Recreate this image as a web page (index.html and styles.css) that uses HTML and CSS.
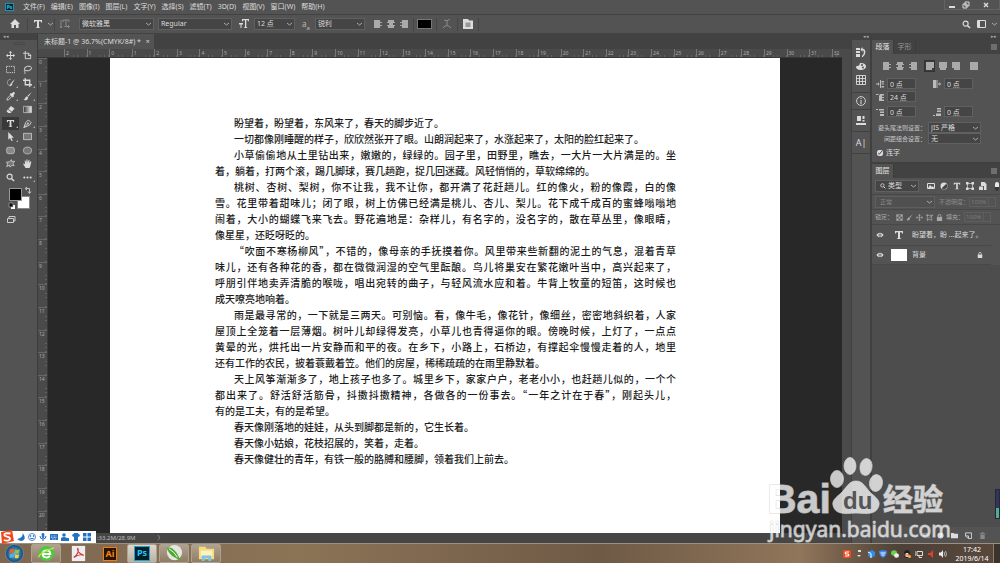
FILE: index.html
```html
<!DOCTYPE html>
<html lang="zh-CN">
<head>
    <meta charset="UTF-8">
    <meta name="viewport" content="width=device-width, initial-scale=1.0">
    <title>未标题-1</title>
    <link rel="stylesheet" href="styles.css">
</head>
<body>
    <svg class="defs" width="0" height="0">
        <symbol id="al" viewBox="0 0 8 8"><path d="M0 0h6v2h2v1H6v2h2v1H6v2H0z"/></symbol>
        <symbol id="ac" viewBox="0 0 8 8"><path d="M1 0h6v2h1v1H6v2h2v1H7v2H1V6H0V5h2V3H0V2h1z"/></symbol>
        <symbol id="ar" viewBox="0 0 8 8"><path d="M2 0h6v8H2V6H0V5h2V3H0V2h2z"/></symbol>
        <symbol id="jl" viewBox="0 0 8 8"><path d="M0 0h8v6H6v2H0z"/></symbol>
        <symbol id="jc" viewBox="0 0 8 8"><path d="M0 0h8v6H7v2H1V6H0z"/></symbol>
        <symbol id="jr" viewBox="0 0 8 8"><path d="M0 0h8v8H2V6H0z"/></symbol>
        <symbol id="ja" viewBox="0 0 8 8"><path d="M0 0h8v8H0z"/></symbol>
        <symbol id="type" viewBox="0 0 10 10"><path d="M1 1h8v2.5h-.8L7.500 2.200H6v6l1.200.4V9H2.800v-.4l1.200-.4v-6H2.500l-.7 1.300H1z"/></symbol>
        <symbol id="search" viewBox="0 0 10 10"><circle cx="4" cy="4" r="2.800" fill="none" stroke="currentColor" stroke-width="1.300"/><path d="M6 6l3 3" stroke="currentColor" stroke-width="1.600"/></symbol>
        <symbol id="eye" viewBox="0 0 10 8"><path d="M0 4Q5-2 10 4Q5 10 0 4z"/><circle cx="5" cy="4" r="2" fill="#535353"/><circle cx="5" cy="4" r="1"/></symbol>
        <symbol id="lock" viewBox="0 0 8 8"><path d="M1 3.500h6V8H1z"/><path d="M2.300 4V2.300a1.700 1.700 0 013.400 0V4" fill="none" stroke="currentColor"/></symbol>
        <symbol id="brush" viewBox="0 0 10 10"><path d="M9.500.3L5 4.200l1 1.200zM4.500 4.800C2.500 5 3 7.500.5 9c3 .6 5-.4 5.200-3z"/></symbol>
        <symbol id="move" viewBox="0 0 10 10"><path d="M5 0l2 2H5.500v2.500H8V3l2 2-2 2V5.500H5.500V8H7l-2 2-2-2h1.500V5.500H2V7L0 5l2-2v1.500h2.500V2H3z"/></symbol>
        <symbol id="menu" viewBox="0 0 6 6"><path d="M0 .5h6v1H0zM0 2.500h6v1H0zM0 4.500h6v1H0z"/></symbol>
    </svg>

    <header class="menubar">
        <span class="ps-logo">Ps</span>
        <nav class="menus">
            <button>文件(F)</button><button>编辑(E)</button><button>图像(I)</button><button>图层(L)</button><button>文字(Y)</button><button>选择(S)</button><button>滤镜(T)</button><button>3D(D)</button><button>视图(V)</button><button>窗口(W)</button><button>帮助(H)</button>
        </nav>
        <div class="window-buttons">
            <button aria-label="最小化"><svg width="8" height="8"><path d="M1 5h6v2H1z"/></svg></button>
            <button aria-label="还原"><svg width="8" height="8"><path d="M3 1h4v4H3zM1 3h4v4H1z" fill="none" stroke="currentColor"/></svg></button>
            <button class="wide" aria-label="关闭"><svg width="8" height="8"><path d="M2 2l4 4M6 2L2 6" stroke="currentColor" stroke-width="1.400"/></svg></button>
        </div>
    </header>

    <div class="options">
        <div class="group home"><button aria-label="主页"><svg width="10" height="10" viewBox="0 0 10 10"><path d="M5 0l5 5H8.500v4H6V6H4v3H1.500V5H0z"/></svg></button></div>
        <div class="group tool">
            <button aria-label="文字工具"><svg width="10" height="10"><use href="#type"/></svg></button>
            <svg class="chev" width="5" height="4"><path d="M0 1l2.500 2L5 1" fill="none" stroke="currentColor"/></svg>
        </div>
        <button class="dim" aria-label="切换文本取向"><svg width="10" height="10" viewBox="0 0 10 10"><path d="M1 1v8M0 7.500L1 9l1-1.500M3 3V1h6v2M6 1v6M4.500 7.500h5M8 6l1.500 1.500L8 9" fill="none" stroke="currentColor"/></svg></button>
        <select class="font" aria-label="字体"><option>微软雅黑</option></select>
        <select class="face" aria-label="字体样式"><option>Regular</option></select>
        <svg class="size-icon" width="10" height="10" viewBox="0 0 10 10"><path d="M3 0h7v2.500H9.500L9 1.200H7.300V8l1 .4V9H5v-.6l1-.4V1.200H4.200L3.700 2.500H3zM0 4h4v1.500H2.500V9h-1V5.500H0z"/></svg>
        <select class="size" aria-label="字号"><option>12 点</option></select>
        <span class="aa">a<sub>a</sub></span>
        <select class="smooth" aria-label="消除锯齿"><option>锐利</option></select>
        <div class="group aligns">
            <button aria-label="左对齐"><svg width="8" height="8"><use href="#al"/></svg></button>
            <button aria-label="居中"><svg width="8" height="8"><use href="#ac"/></svg></button>
            <button aria-label="右对齐"><svg width="8" height="8"><use href="#ar"/></svg></button>
        </div>
        <div class="group"><button class="color" aria-label="文本颜色"></button></div>
        <div class="group"><button class="dim" aria-label="变形文字"><svg width="10" height="10" viewBox="0 0 10 10"><path d="M2 1q3 2 6-1M5 1.500v5M1 9q4-5 8 0" fill="none" stroke="currentColor"/></svg></button></div>
        <div class="group"><button aria-label="字符面板"><svg width="10" height="10" viewBox="0 0 10 10"><path d="M0 0h5l1 1.500h4V10H0z"/><path d="M2.500 3.500h5v4.500h-5z" fill="#999"/></svg></button></div>
        <div class="options-right">
            <button aria-label="搜索"><svg width="9" height="9"><use href="#search"/></svg></button>
            <button aria-label="工作区"><svg width="9" height="8"><path d="M.5.500h8v7h-8z" fill="none" stroke="currentColor"/><path d="M1 1h2v6H1z"/></svg></button>
            <svg class="chev" width="5" height="4"><path d="M0 1l2.500 2L5 1" fill="none" stroke="currentColor"/></svg>
        </div>
    </div>

    <main class="workspace">
        <aside class="toolbar">
            <div class="collapse">◂◂</div>
            <div class="grip"></div>
            <div class="tools">
                <button aria-label="移动"><svg viewBox="0 0 10 10"><use href="#move"/></svg></button>
                <button aria-label="画板"><svg viewBox="0 0 10 10"><path d="M2.500 2.500h4l2 2v4h-6zM2.500 0v2.500H0M6 2.500V5h3" fill="none" stroke="currentColor"/></svg></button>
                <button aria-label="选框"><svg viewBox="0 0 10 10"><path d="M.5 1.500h9v7h-9z" fill="none" stroke="currentColor" stroke-dasharray="1.500 1"/></svg></button>
                <button aria-label="套索"><svg viewBox="0 0 10 10"><ellipse cx="5.500" cy="4" rx="4" ry="2.500" transform="rotate(-12 5 4)" fill="none" stroke="currentColor"/><path d="M2.500 5.500C0 7 3 8 2 10" fill="none" stroke="currentColor"/></svg></button>
                <button class="more" aria-label="快速选择"><svg viewBox="0 0 10 10"><path d="M5 1.500a3.500 3.500 0 100 7" fill="none" stroke="currentColor" stroke-width=".8" stroke-dasharray="1.500 .5"/><path d="M10 1L6 5l1 1.200zM6 5.500C4.500 6 5 8 3.500 8.500c2 .7 3.500 0 3.500-2z"/></svg></button>
                <button class="more" aria-label="裁剪"><svg viewBox="0 0 10 10"><path d="M2.500 0v7.500H10M0 2.500h7.500V10" fill="none" stroke="currentColor" stroke-width="1.400"/></svg></button>
                <button class="more" aria-label="吸管"><svg viewBox="0 0 10 10"><path d="M9.500.5c-1-1-2.200 0-3 1.200L5.500 1 4 2.500 7.500 6 9 4.500 8.300 3.500c1-1 2-2 1.200-3z"/><path d="M5 3.500L1.500 7 1 9l2-.5L6.500 5" fill="none" stroke="currentColor"/></svg></button>
                <button class="more" aria-label="画笔"><svg viewBox="0 0 10 10"><use href="#brush"/></svg></button>
                <button aria-label="橡皮擦"><svg viewBox="0 0 10 10"><path d="M5.500 1l4 3-3 3.500-4-3zM2 5l4 3-.8 1H2.500L.5 7z"/></svg></button>
                <button aria-label="渐变"><svg viewBox="0 0 10 10"><linearGradient id="g"><stop stop-color="#333"/><stop offset="1" stop-color="#eee"/></linearGradient><path d="M.5 1.500h9v7h-9z" fill="url(#g)" stroke="#ccc" stroke-width=".8"/></svg></button>
                <button class="more active" aria-label="文字"><svg viewBox="0 0 10 10"><use href="#type"/></svg></button>
                <button class="more" aria-label="钢笔"><svg viewBox="0 0 10 10"><path d="M6 1l3 3-2 3-6 2.500L3 4zM1 9.500L5 5.500" fill="none" stroke="currentColor"/><circle cx="5.500" cy="5" r="1"/></svg></button>
                <button class="more" aria-label="路径选择"><svg viewBox="0 0 10 10"><path d="M2.500 0v8.500l2-1.700L6 10l1.500-.6L6 6.300h2.700z"/></svg></button>
                <button aria-label="矩形"><svg viewBox="0 0 10 10"><path d="M.5 1.500h9v7h-9z" fill="#777" stroke="currentColor" stroke-width=".8"/></svg></button>
                <button aria-label="圆角矩形"><svg viewBox="0 0 10 10"><rect x=".7" y="1.500" width="8.600" height="7" rx="2" fill="#888" stroke="currentColor" stroke-width=".7"/></svg></button>
                <button aria-label="椭圆"><svg viewBox="0 0 10 10"><ellipse cx="5" cy="5" rx="4.500" ry="3.800" fill="#777" stroke="currentColor" stroke-width=".7"/></svg></button>
                <button aria-label="自定形状"><svg viewBox="0 0 10 10"><path d="M4 3L6 .7 6.500 3l3-.7L8 5l1 2.500-2.500-.3L4.500 9 3.800 7 .8 8.500l1-3L.5 3.500z" fill="#777" stroke="currentColor" stroke-width=".8"/></svg></button>
                <button aria-label="抓手"><svg viewBox="0 0 10 10"><path d="M2.800 10C2 8.500.2 6.500.3 5.300c.8-.6 1.500.5 2 .9L1.900 2c.8-.7 1.200 0 1.500 2.500L4 .5c.8-.6 1.200 0 1.200 3.700L6.300 1c1-.4 1 .5.7 3.800l1.300-2.300c1-.2 1 .6.500 2.500-.3 2-.8 3.500-1.600 5z"/></svg></button>
                <button aria-label="缩放"><svg viewBox="0 0 10 10"><use href="#search"/></svg></button>
                <button class="more" aria-label="编辑工具栏"><svg viewBox="0 0 10 10"><circle cx="1.500" cy="5" r="1.200"/><circle cx="5" cy="5" r="1.200"/><circle cx="8.500" cy="5" r="1.200"/></svg></button>
            </div>
            <svg class="swatches" width="34" height="40" viewBox="0 0 34 40">
                <path d="M15.500 12.500h12v12h-12z" fill="#fff" stroke="#888"/>
                <path d="M7.500 4.500h12v12h-12z" fill="#000" stroke="#999"/>
                <path d="M24 4.500h3.500V9M25 3l-2 1.500L25 6M26 7.500L27.500 9.500 29 7.500" fill="none" stroke="#ccc" stroke-width=".9"/>
                <path d="M9 21h4v4H9z" fill="#fff"/><path d="M7 19h4v4H7z" fill="#111" stroke="#bbb" stroke-width=".6"/>
                <path d="M5.500 34.500h6v4h-6zM7 34v-1.500h6v4.500h-1.500" fill="none" stroke="#ccc"/>
            </svg>
        </aside>

        <section class="document">
            <div class="tabs"><div class="tab">未标题-1 @ 36.7%(CMYK/8#) * <button aria-label="关闭文档">×</button></div></div>
            <div class="ruler-top" id="rulerTop"></div>
            <div class="stage">
                <div class="ruler-left" id="rulerLeft"></div>
                <div class="canvas">
                    <article class="paper">
                        <p><span>盼望着，盼望着，东风来了，春天的脚步近了。</span></p>
                        <p><span>一切都像刚睡醒的样子，欣欣然张开了眼。山朗润起来了，水涨起来了，太阳的脸红起来了。</span></p>
                        <p><span class="full">小草偷偷地从土里钻出来，嫩嫩的，绿绿的。园子里，田野里，瞧去，一大片一大片满是的。坐</span><span>着，躺着，打两个滚，踢几脚球，赛几趟跑，捉几回迷藏。风轻悄悄的，草软绵绵的。</span></p>
                        <p><span class="full">桃树、杏树、梨树，你不让我，我不让你，都开满了花赶趟儿。红的像火，粉的像霞，白的像</span><span class="full">雪。花里带着甜味儿；闭了眼，树上仿佛已经满是桃儿、杏儿、梨儿。花下成千成百的蜜蜂嗡嗡地</span><span class="full">闹着，大小的蝴蝶飞来飞去。野花遍地是：杂样儿，有名字的，没名字的，散在草丛里，像眼睛，</span><span>像星星，还眨呀眨的。</span></p>
                        <p><span class="full">“吹面不寒杨柳风”，不错的，像母亲的手抚摸着你。风里带来些新翻的泥土的气息，混着青草</span><span class="full">味儿，还有各种花的香，都在微微润湿的空气里酝酿。鸟儿将巢安在繁花嫩叶当中，高兴起来了，</span><span class="full">呼朋引伴地卖弄清脆的喉咙，唱出宛转的曲子，与轻风流水应和着。牛背上牧童的短笛，这时候也</span><span>成天嘹亮地响着。</span></p>
                        <p><span class="full">雨是最寻常的，一下就是三两天。可别恼。看，像牛毛，像花针，像细丝，密密地斜织着，人家</span><span class="full">屋顶上全笼着一层薄烟。树叶儿却绿得发亮，小草儿也青得逼你的眼。傍晚时候，上灯了，一点点</span><span class="full">黄晕的光，烘托出一片安静而和平的夜。在乡下，小路上，石桥边，有撑起伞慢慢走着的人，地里</span><span>还有工作的农民，披着蓑戴着笠。他们的房屋，稀稀疏疏的在雨里静默着。</span></p>
                        <p><span class="full">天上风筝渐渐多了，地上孩子也多了。城里乡下，家家户户，老老小小，也赶趟儿似的，一个个</span><span class="full">都出来了。舒活舒活筋骨，抖擞抖擞精神，各做各的一份事去。“一年之计在于春”，刚起头儿，</span><span>有的是工夫，有的是希望。</span></p>
                        <p><span>春天像刚落地的娃娃，从头到脚都是新的，它生长着。</span></p>
                        <p><span>春天像小姑娘，花枝招展的，笑着，走着。</span></p>
                        <p><span>春天像健壮的青年，有铁一般的胳膊和腰脚，领着我们上前去。</span></p>
                    </article>
                </div>
            </div>
            <div class="status"><span>:33.2M/28.9M</span><span>〉</span></div>
        </section>

        <aside class="dock">
            <div class="collapse">◂◂</div>
            <div class="dock-group first">
                <button aria-label="历史记录"><svg viewBox="0 0 10 10"><path d="M0 1h4v2H0zM0 4h4v2H0zM0 7h4v3H0z"/><path d="M5 2.500h2Q9 3 8.500 6T6 9.500" fill="none" stroke="currentColor" stroke-width="1.500"/><path d="M6.500 0v5L4.500 2.500z"/></svg></button>
                <button aria-label="颜色"><svg viewBox="0 0 10 10"><path d="M5 2c3 0 5 1.500 5 3.500S7.500 9 4.500 9 0 7.500 0 6s2-1 3-1.500S3 2 5 2z"/><circle cx="6" cy="4" r="1" fill="#535353"/><circle cx="7" cy="6.500" r="1" fill="#535353"/></svg></button>
                <button aria-label="色板"><svg viewBox="0 0 10 10"><path d="M.5.500h9v9h-9zM3.500.500v9M6.500.500v9M.5 3.500h9M.5 6.500h9" fill="none" stroke="currentColor" stroke-width=".9"/></svg></button>
            </div>
            <div class="dock-group info"><button aria-label="信息"><svg viewBox="0 0 10 10"><circle cx="5" cy="5" r="4.400" fill="none" stroke="currentColor" stroke-width=".9"/><path d="M4.500 2h1v1h-1zM4.500 4h1v4h-1z"/></svg></button></div>
            <div class="dock-group"><button aria-label="属性"><svg viewBox="0 0 10 10"><path d="M1 0h4v5H1zM6.500 0h2v3h-2zM6.500 4h2v1.500h-2zM0 7h10v2H0z"/></svg></button></div>
            <div class="dock-group"><button class="letter" aria-label="字符">A|</button></div>
        </aside>

        <aside class="panels">
            <div class="collapse right">▸▸</div>
            <section class="paragraph">
                <div class="panel-tabs"><button class="on">段落</button><button>字形</button><svg width="6" height="6"><use href="#menu"/></svg></div>
                <div class="align-row">
                    <button aria-label="左对齐文本"><svg><use href="#al"/></svg></button><button aria-label="居中对齐文本"><svg><use href="#ac"/></svg></button><button aria-label="右对齐文本"><svg><use href="#ar"/></svg></button>
                    <button class="picked" aria-label="最后一行左对齐"><svg><use href="#jl"/></svg></button><button aria-label="最后一行居中"><svg><use href="#jc"/></svg></button><button aria-label="最后一行右对齐"><svg><use href="#jr"/></svg></button>
                    <button class="last" aria-label="全部对齐"><svg><use href="#ja"/></svg></button>
                </div>
                <div class="indents">
                    <label><svg viewBox="0 0 8 8"><path d="M0 3.500h2V2l1.500 2L2 6V4.500H0zM4 0h1v8H4zM5.500 1H8v1.500H5.500zM5.500 3.500H8v1H5.500zM5.500 6H8v1.500H5.500z"/></svg><input type="text" value="0 点" aria-label="左缩进"></label>
                    <label><svg viewBox="0 0 8 8"><path d="M0 0h3v8H0zM3.500 0h1v8h-1zM5 3.500h1.500V2L8 4 6.500 6V4.500H5z"/></svg><input type="text" value="0 点" aria-label="右缩进"></label>
                    <label><svg viewBox="0 0 8 8"><path d="M0 1h2.500v1H0zM4 1h4v1.500H6V4h2v1H6v1.500h2V8H3V3z"/></svg><input type="text" value="24 点" aria-label="首行缩进"></label>
                </div>
                <div class="indents spacing">
                    <label><svg viewBox="0 0 8 8"><path d="M0 1h2v1H0zM3 1h5v1.500H3zM4 3.500h4V5H4zM4 6h4v2H4z"/></svg><input type="text" value="0 点" aria-label="段前间距"></label>
                    <label><svg viewBox="0 0 8 8"><path d="M0 7h2v1H0zM4 0h4v1.500H4zM4 2.500h4V4H4zM3 5.500h5V8H3z"/></svg><input type="text" value="0 点" aria-label="段后间距"></label>
                </div>
                <div class="rule"><label for="kinsoku">避头尾法则设置：</label><select id="kinsoku"><option>JIS 严格</option></select></div>
                <div class="rule"><label for="mojikumi">间距组合设置：</label><select id="mojikumi"><option>无</option></select></div>
                <label class="hyphen"><input type="checkbox" checked>连字</label>
            </section>

            <section class="layers">
                <div class="panel-tabs"><button class="on">图层</button><svg width="6" height="6"><use href="#menu"/></svg></div>
                <div class="filter">
                    <div class="kind"><svg viewBox="0 0 10 10"><use href="#search"/></svg><select aria-label="筛选"><option>类型</option></select></div>
                    <button aria-label="像素"><svg viewBox="0 0 8 8"><path d="M.5 1.500h7v5h-7z" fill="none" stroke="currentColor"/><path d="M1 6l2-3 2 2 1-1 1 2z"/></svg></button>
                    <button aria-label="调整"><svg viewBox="0 0 8 8"><circle cx="4" cy="4" r="3.500"/><path d="M6.300 1.700a3.200 3.200 0 01-4.600 4.600z" fill="#444"/></svg></button>
                    <button aria-label="文字图层"><svg viewBox="0 0 10 10"><use href="#type"/></svg></button>
                    <button aria-label="形状"><svg viewBox="0 0 8 8"><path d="M1.500 1.500h5v5h-5z" fill="none" stroke="currentColor" stroke-width=".7"/><path d="M0 0h2.500v2.500H0zM5.500 0H8v2.500H5.500zM0 5.500h2.500V8H0zM5.500 5.500H8V8H5.500z"/></svg></button>
                    <button aria-label="智能对象"><svg viewBox="0 0 8 8"><path d="M2 0h3.500L7.500 2v6H5V4H2zM0 4.500h4V8H0z"/></svg></button>
                    <span class="toggle"></span>
                </div>
                <div class="blend">
                    <select class="mode" aria-label="混合模式" disabled><option>正常</option></select>
                    <label for="opacity">不透明度：</label><input id="opacity" type="text" value="100%" disabled><i></i>
                </div>
                <div class="lockrow">
                    <span>锁定：</span>
                    <svg viewBox="0 0 8 8"><path d="M.5.500h7v7h-7z" fill="none" stroke="currentColor" stroke-width=".7"/><path d="M1 1h2v2H1zM5 1h2v2H5zM3 3h2v2H3zM1 5h2v2H1zM5 5h2v2H5z"/></svg>
                    <svg viewBox="0 0 10 10"><use href="#brush"/></svg>
                    <svg viewBox="0 0 10 10"><use href="#move"/></svg>
                    <svg viewBox="0 0 8 8"><path d="M1.500 0v8M0 1.500h8M6.500 2v6M1 6.500h5M3 5l5-4" fill="none" stroke="currentColor" stroke-width=".8"/></svg>
                    <svg viewBox="0 0 8 8"><use href="#lock"/></svg>
                    <label for="fill">填充：</label>
                    <div class="amount"><input id="fill" type="text" value="100%" disabled><i></i></div>
                </div>
                <div class="layer current">
                    <svg class="eye" viewBox="0 0 10 8"><use href="#eye"/></svg>
                    <svg class="thumb-t" viewBox="0 0 10 10"><use href="#type"/></svg>
                    <span>盼望着，盼 ...起来了。</span>
                </div>
                <div class="layer">
                    <svg class="eye" viewBox="0 0 10 8"><use href="#eye"/></svg>
                    <div class="thumb"></div>
                    <span>背景</span>
                    <svg class="padlock" viewBox="0 0 8 8"><use href="#lock"/></svg>
                </div>
                <div class="layer-space"></div>
                <div class="layer-actions">
                    <button aria-label="蒙版"><svg viewBox="0 0 8 8"><path d="M0 1h8v6H0z" fill="#888"/></svg></button>
                    <button aria-label="调整图层"><svg viewBox="0 0 8 8"><circle cx="4" cy="4" r="3.500"/></svg></button>
                    <button aria-label="新建组"><svg viewBox="0 0 8 8"><path d="M0 1h3l1 1h4v5H0z"/></svg></button>
                    <button aria-label="新建图层"><svg viewBox="0 0 8 8"><path d="M.5 1h7v6.500H4L.5 4.500zM.5 4.500H4v3" fill="none" stroke="currentColor"/></svg></button>
                    <button class="dim" aria-label="删除"><svg viewBox="0 0 8 8"><path d="M1 1.500h6v1H1zM3 0h2v1H3zM1.500 3h5v5h-5z"/></svg></button>
                </div>
            </section>
        </aside>
    </main>

    <footer class="taskbar">
        <button class="app" aria-label="开始"><svg viewBox="0 0 20 20"><radialGradient id="orb"><stop stop-color="#58b8ea"/><stop offset="1" stop-color="#174571"/></radialGradient><circle cx="10" cy="10" r="9.500" fill="url(#orb)" stroke="#83a9c2" stroke-width=".6"/><path d="M5 6q2-1.500 4.500-.5v4Q7 9 4.500 10z" fill="#e8632b"/><path d="M10.500 5.800q2.500 1 5-.3l-.7 4q-2 1-4.300.3z" fill="#8dc63f"/><path d="M4.500 11q2.500-1.200 5-.4v4Q7 13.600 5 15z" fill="#4db2ec"/><path d="M10.500 11q2 .7 4.300-.3l-.7 4q-1.800.8-3.600.1z" fill="#fcd13a"/></svg></button>
        <button class="app open" aria-label="浏览器"><svg viewBox="0 0 20 20"><circle cx="10" cy="10" r="8" fill="#4cc93e"/><path d="M6 10.500h8c0-5-8-5-8 0 0 4.500 6 4.500 7.500 1.800" fill="none" stroke="#fff" stroke-width="2"/><path d="M2 14Q1 10 18 4" fill="none" stroke="#b8ec4c" stroke-width="1.500"/></svg></button>
        <button class="app" aria-label="PDF"><svg viewBox="0 0 20 20"><path d="M3 2h14v16H3z" fill="#eee"/><path d="M5 14c4-2 5.500-7 4.500-9s-1 5 6 7c-3-1.500-7 0-10 2z" fill="none" stroke="#d33b3b" stroke-width="1.200"/></svg></button>
        <button class="app" aria-label="Illustrator"><span class="adobe">Ai</span></button>
        <button class="app open bright" aria-label="Photoshop"><span class="adobe ps">Ps</span></button>
        <button class="app open" aria-label="CorelDRAW"><svg viewBox="0 0 20 20"><circle cx="10" cy="9" r="8" fill="#e4e7df"/><path d="M2 4q5-2 10 5l5 9-7-4Q4 11 2 4z" fill="#49a92d"/><path d="M4 5q6 3 9 9" fill="none" stroke="#fff"/></svg></button>
        <button class="app open" aria-label="资源管理器"><svg viewBox="0 0 20 20"><path d="M2 3h7l1 2h8v11H2z" fill="#f6dc81"/><path d="M4 7h12v6H4z" fill="#fff3bd"/><path d="M5 18v-6h10v6h-3v-3H8v3z" fill="#7cc4ec"/></svg></button>
        <div class="tray">
            <svg viewBox="0 0 8 8"><rect width="8" height="8" rx="1" fill="#eb4b20"/><path d="M6 2H3q-1.500 1 0 2h2q1.500 1 0 2H2" fill="none" stroke="#fff" stroke-width="1.200"/></svg>
            <svg viewBox="0 0 8 8"><path d="M3 0h3v2H3zM2 5h4L4 7z" fill="#ddd"/></svg>
            <svg viewBox="0 0 8 8"><path d="M1 2l4-2 3 2v4L4 8 1 6z" fill="#2d8ce8"/><path d="M1 2l3 1.500V8" fill="none" stroke="#fff"/></svg>
            <svg viewBox="0 0 8 8"><path d="M0 1l4-1 4 1q0 5-4 7-4-2-4-7z" fill="#3c87ee"/><path d="M1.500 3h5M2.500 5h3" stroke="#fff"/></svg>
            <svg viewBox="0 0 8 8"><ellipse cx="3" cy="3" rx="3" ry="2.700" fill="#65d145"/><ellipse cx="5.500" cy="5.500" rx="2.500" ry="2.200" fill="#eee"/></svg>
            <svg viewBox="0 0 8 8"><ellipse cx="4" cy="4" rx="3" ry="4" fill="#222"/><ellipse cx="4" cy="5" rx="1.800" ry="2" fill="#fff"/><path d="M1 4.500h6v1H1z" fill="#e33"/><circle cx="6.500" cy="6.500" r="1.500" fill="#f5b62e"/></svg>
            <svg viewBox="0 0 8 8"><path d="M2 1.500h5.500v4H2zM0 1v4h1M4 6v1.500h3" fill="none" stroke="#ddd"/></svg>
            <svg viewBox="0 0 8 8"><path d="M6 0v8L3 5H1V3h2z" fill="#d6452f"/></svg>
            <svg viewBox="0 0 8 8"><path d="M4 0v8L2 5.500H0v-3h2z" fill="#eee"/><path d="M5 2q1.500 2 0 4M6.500 1q2 3 0 6" fill="none" stroke="#ddd" stroke-width=".7"/></svg>
            <time class="clock">17:42<br>2019/6/14</time>
        </div>
        <button class="desktop" aria-label="显示桌面"></button>
    </footer>

    <!-- 输入法状态条 -->
    <div class="ime">
        <svg class="sogou" viewBox="0 0 14 14"><path d="M1 2L12 0l2 11-12 3z" fill="#f0481e"/><path d="M10.500 3.500Q4 2.500 4.300 5.200C4.500 7 10 6 10 8.500S6 11 3.800 10" fill="none" stroke="#fff" stroke-width="1.800"/></svg>
        <svg viewBox="0 0 8 8"><path d="M5.500 0q1 5-5.500 6 5 4 7.500 0 1-3-2-6z"/></svg>
        <svg viewBox="0 0 8 8"><circle cx="4" cy="4" r="3.500" fill="none" stroke="currentColor" stroke-width=".8"/><path d="M2 2.500h1v1H2zM5 2.500h1v1H5zM2 5q2 2 4 0" stroke="currentColor" stroke-width=".5"/></svg>
        <svg viewBox="0 0 8 8"><rect x="2.700" width="2.600" height="5" rx="1.300"/><path d="M1 3q0 3 3 3t3-3M4 6v2" fill="none" stroke="currentColor"/></svg>
        <svg viewBox="0 0 8 8"><path d="M0 1h8v6H0z"/><path d="M1 3h6M1 4.500h6M2 6h4" stroke="#fff" stroke-width=".6" stroke-dasharray="1 .5"/></svg>
        <svg viewBox="0 0 8 8"><circle cx="3" cy="2" r="1.800"/><path d="M0 8V5q3-2 6 0h2v3z"/></svg>
        <svg viewBox="0 0 8 8"><path d="M2.500 0h3L8 2 7 4 6 3.500V8H2V3.500L1 4 0 2z"/></svg>
        <svg viewBox="0 0 8 8"><path d="M0 0h3.500v3.500H0zM4.500 0H8v3.500H4.500zM0 4.500h3.500V8H0zM4.500 4.500H8V8H4.500z"/></svg>
    </div>

    <div class="meter"></div>

    <svg class="watermark" width="184" height="90" viewBox="0 0 184 90">
        <g class="mark">
            <text x="0" y="56" class="bai">Bai</text>
            <ellipse cx="70" cy="22" rx="6.500" ry="8.500"/>
            <ellipse cx="83" cy="9" rx="6" ry="8.500"/>
            <ellipse cx="99" cy="10" rx="6" ry="8.500" transform="rotate(10 99 10)"/>
            <ellipse cx="109" cy="26" rx="6.500" ry="8.500" transform="rotate(10 109 26)"/>
            <path d="M89 24c8 0 10 8 16 13s9 8 6 14-10 6-22 5c-12 1-19 1-22-5s0-9 6-14 8-13 16-13z"/>
            <text x="116" y="53" class="jing">经验</text>
            <text x="2" y="80" class="url">jingyan.baidu.com</text>
        </g>
        <text x="76" y="52" class="du">du</text>
    </svg>

    <script>
        // 标尺刻度
        const rulerTop = document.getElementById('rulerTop');
        const rulerLeft = document.getElementById('rulerLeft');

        function addMark(parent, n) {
            const mark = document.createElement('span');
            mark.textContent = n;
            parent.appendChild(mark);
        }

        for (let i = -2; i <= 32; i++) {
            addMark(rulerTop, Math.abs(i));
        }
        for (let i = 0; i < 21; i++) {
            addMark(rulerLeft, i);
        }
    </script>
</body>
</html>
```
FILE: styles.css
```css
* {
    box-sizing: border-box;
}

body {
    display: flex;
    flex-direction: column;
    height: 100vh;
    margin: 0;
    overflow: hidden;
    background-color: #535353;
    color: #dcdcdc;
    font-family: "Noto Sans", "Noto Sans CJK SC", sans-serif;
    font-size: 7px;
    line-height: 10px;
}

button, input, select {
    margin: 0;
    padding: 0;
    border: 0;
    border-radius: 0;
    background: none;
    color: inherit;
    font: inherit;
}

button {
    display: flex;
    align-items: center;
    justify-content: center;
}

svg {
    display: block;
    flex: none;
    fill: currentColor;
}

select {
    appearance: none;
    height: 12px;
    padding: 0 10px 0 2px;
    border: 1px solid #606060;
    background: #454545 url("data:image/svg+xml,%3Csvg xmlns='http://www.w3.org/2000/svg' width='5' height='4'%3E%3Cpath d='M0 1l2.5 2L5 1' fill='none' stroke='%23aaa'/%3E%3C/svg%3E") no-repeat right 2px center;
}

.defs {
    position: absolute;
}

.dim {
    color: #8a8a8a;
}

/* menu bar */
.menubar {
    display: flex;
    flex: none;
    align-items: center;
    height: 15px;
    padding-left: 5px;
    border-bottom: 1px solid #424242;
}

.ps-logo {
    width: 9px;
    height: 8px;
    border: 1px solid #1c93b5;
    background-color: #06232f;
    color: #2cc4ee;
    font-size: 5px;
    font-weight: bold;
    line-height: 6px;
    text-align: center;
}

.menus {
    display: flex;
    gap: 6px;
    margin-left: 9px;
}

.window-buttons {
    display: flex;
    align-self: flex-start;
    margin-left: auto;
    border: 1px solid #626262;
    border-top: 0;
}

.window-buttons button {
    width: 14px;
    height: 9px;
}

.window-buttons .wide {
    width: 26px;
}

/* options bar */
.options {
    display: flex;
    flex: none;
    align-items: center;
    height: 19px;
    padding: 0 3px 0 2px;
    border-bottom: 1px solid #424242;
}

.group {
    display: flex;
    align-items: center;
    height: 13px;
    padding: 0 5px;
    border-right: 1px solid #454545;
}

.home {
    width: 26px;
    padding-left: 8px;
}

.tool {
    gap: 5px;
    width: 27px;
    margin-right: 5px;
}

.chev {
    color: #aaa;
}

.font {
    width: 75px;
    margin-left: 9px;
}

.face {
    width: 74px;
    margin-left: 4px;
}

.size-icon {
    margin: 0 5px 0 7px;
}

.size {
    width: 41px;
}

.aa {
    margin: 0 5px 0 7px;
    color: #bbb;
    font-size: 8px;
}

.aa sub {
    font-size: 6px;
    line-height: 0;
}

.smooth {
    width: 50px;
}

.aligns {
    gap: 5px;
    margin-left: 3px;
    padding-left: 6px;
    color: #aaa;
}

.aligns + .group {
    padding: 0 4px 0 3px;
}

.color {
    width: 15px;
    height: 10px;
    border: 1px solid #777;
    background-color: #000;
}

.options-right {
    display: flex;
    align-items: center;
    gap: 6px;
    margin-left: auto;
}

/* workspace */
.workspace {
    display: flex;
    flex: 1;
    min-height: 0;
}

.collapse {
    flex: none;
    height: 6px;
    padding-left: 3px;
    background-color: #424242;
    color: #aaa;
    font-size: 5px;
    line-height: 5px;
}

.collapse.right {
    padding-right: 3px;
    text-align: right;
}

.toolbar {
    flex: none;
    width: 38px;
    border-right: 1px solid #3c3c3c;
}

.grip {
    width: 12px;
    height: 3px;
    margin: 2px auto 4px;
    border-top: 1px solid #484848;
    border-bottom: 1px solid #484848;
}

.tools {
    display: grid;
    grid-template-columns: 17px 17px;
    grid-auto-rows: 1fr;
    height: 135px;
    padding-left: 2px;
}

.tools button {
    position: relative;
}

.tools svg {
    width: 9px;
    height: 9px;
}

.tools .active {
    background-color: #383838;
}

.tools .more::after {
    content: '';
    position: absolute;
    right: 1px;
    bottom: 2px;
    border: 1px solid transparent;
    border-right-color: #aaa;
    border-bottom-color: #aaa;
}

.swatches {
    margin-left: 2px;
}

.document {
    display: flex;
    flex: 1;
    flex-direction: column;
    min-width: 0;
    background-color: #4a4a4a;
}

.tabs {
    display: flex;
    flex: none;
    height: 15px;
    background-color: #424242;
}

.tab {
    display: flex;
    align-items: center;
    gap: 3px;
    padding: 0 4px 0 6px;
    background-color: #535353;
    white-space: pre;
}

.ruler-top {
    display: flex;
    flex: none;
    height: 9px;
    margin-right: 9px;
    padding-left: 26px;
    overflow: hidden;
    border-bottom: 1px solid #383838;
    background-color: #4a4a4a;
    color: #aaa;
    font-size: 5px;
    line-height: 8px;
}

.ruler-top span {
    flex: 10 1 0;
    min-width: 0;
    padding-left: 1px;
    border-left: 1px solid #777;
    background: repeating-linear-gradient(to right, transparent 0 17%, #626262 17% 20%) bottom / 100% 2px no-repeat;
}

.ruler-top span:last-child {
    flex-grow: 4;
}

.stage {
    display: flex;
    flex: 1;
    min-height: 0;
}

.ruler-left {
    display: flex;
    flex: none;
    flex-direction: column;
    width: 10px;
    border-right: 1px solid #383838;
    color: #aaa;
    font-size: 5px;
    line-height: 7px;
}

.ruler-left span {
    flex: 1;
    min-height: 0;
    padding-left: 1px;
    border-top: 1px solid #666;
    background: repeating-linear-gradient(to bottom, transparent 0 17%, #626262 17% 20%) right / 2px 100% no-repeat;
}

.canvas {
    display: flex;
    flex: 1;
    margin-right: 9px;
    padding: 0 62px;
    background-color: #282828;
}

.paper {
    flex: 1;
    padding: 57px 104px 0 105px;
    background-color: #fff;
    color: #1c1c1c;
    font-family: "Noto Sans CJK SC", sans-serif;
    font-size: 10px;
    font-weight: 500;
    line-height: 16px;
}

.paper p {
    margin: 0;
}

.paper span {
    display: block;
    white-space: nowrap;
}

.paper span:first-child {
    padding-left: 19px;
}

.paper .full {
    text-align: justify;
    text-align-last: justify;
    white-space: normal;
}

.status {
    display: flex;
    flex: none;
    gap: 22px;
    height: 10px;
    padding-left: 59px;
    background-color: #464646;
    color: #bbb;
    font-size: 6px;
}

/* collapsed panel icons */
.dock {
    flex: none;
    width: 21px;
    border-right: 2px solid #404040;
    border-left: 1px solid #404040;
}

.dock .collapse {
    padding-left: 11px;
}

.dock-group {
    padding: 5px 4px 4px;
    border-bottom: 1px solid #404040;
}

.dock-group.first {
    padding: 6px 4px 3px;
}

.dock-group.info {
    padding: 2px 4px;
}

.dock-group button {
    width: 10px;
    height: 10px;
    margin: 1px 0;
}

.dock-group.first button {
    margin-bottom: 4px;
}

.dock-group svg {
    width: 10px;
    height: 10px;
}

.dock-group .letter {
    font-size: 9px;
}

/* panels */
.panels {
    display: flex;
    flex: none;
    flex-direction: column;
    width: 128px;
}

.panel-tabs {
    display: flex;
    height: 14px;
    background-color: #424242;
    color: #999;
}

.panel-tabs button {
    width: 22px;
    border-right: 1px solid #3c3c3c;
}

.panel-tabs .on {
    background-color: #535353;
    color: #e8e8e8;
}

.panel-tabs svg {
    margin: 4px 3px 0 auto;
}

.align-row {
    display: flex;
    gap: 2px;
    padding: 6px 0 0 9px;
    color: #aaa;
}

.align-row button {
    width: 11px;
    height: 12px;
}

.align-row svg {
    width: 8px;
    height: 8px;
}

.align-row .picked {
    margin-left: 4px;
    border: 1px solid #333;
    background-color: #3c3c3c;
}

.align-row .last {
    margin-left: 5px;
}

.indents {
    display: grid;
    grid-template-columns: 57px 57px;
    row-gap: 2px;
    padding: 6px 0 0 4px;
}

.indents.spacing {
    padding-top: 4px;
}

.indents label {
    display: flex;
    align-items: center;
    gap: 3px;
}

.indents svg {
    width: 8px;
    height: 8px;
    color: #bbb;
}

.indents input {
    width: 29px;
    height: 11px;
    padding-left: 2px;
    border: 1px solid #606060;
    background-color: #454545;
}

.rule {
    display: grid;
    grid-template-columns: 54px 53px;
    gap: 2px;
    align-items: center;
    height: 11px;
    white-space: nowrap;
}

.indents.spacing + .rule {
    margin-top: 5px;
}

.rule label {
    color: #ccc;
    font-size: 6px;
    text-align: right;
}

.rule select {
    height: 11px;
}

.hyphen {
    display: flex;
    align-items: center;
    gap: 3px;
    padding: 4px 0 4px 5px;
}

.hyphen input {
    width: 6px;
    height: 6px;
    accent-color: #ddd;
}

.layers {
    display: flex;
    flex: 1;
    flex-direction: column;
    border-top: 2px solid #404040;
}

.layers .panel-tabs {
    flex: none;
}

.filter {
    display: flex;
    align-items: center;
    gap: 5px;
    height: 17px;
    padding: 0 1px 0 3px;
    border-bottom: 1px solid #484848;
}

.filter svg {
    width: 8px;
    height: 8px;
}

.kind {
    display: flex;
    align-items: center;
    width: 44px;
    margin-right: 3px;
    padding-left: 4px;
    border: 1px solid #606060;
    background-color: #454545;
}

.kind svg {
    width: 6px;
    height: 6px;
}

.kind select {
    flex: 1;
    height: 10px;
    border: 0;
}

.toggle {
    width: 4px;
    height: 9px;
    margin-left: auto;
    border-radius: 2px;
    background: linear-gradient(#e8e8e8 50%, #383838 50%);
}

.blend, .lockrow {
    display: flex;
    align-items: center;
    height: 15px;
    padding-left: 3px;
    border-bottom: 1px solid #484848;
    color: #8a8a8a;
    font-size: 6px;
    white-space: nowrap;
}

.mode {
    width: 60px;
    margin-right: 4px;
    padding-left: 4px;
    border-color: #5e5e5e;
    background-color: #505050;
    opacity: 1;
}

.blend input, .lockrow input {
    width: 20px;
    height: 10px;
    padding-left: 1px;
    border: 1px solid #5e5e5e;
    color: #7c7c7c;
}

.blend i, .lockrow i {
    width: 7px;
    height: 10px;
    border: 1px solid #5e5e5e;
    border-left: 0;
}

.lockrow {
    gap: 3px;
    color: #aaa;
}

.lockrow svg {
    width: 7px;
    height: 7px;
}

.lockrow .amount {
    display: flex;
    margin-left: -3px;
}

.layer {
    display: flex;
    flex: none;
    align-items: center;
    height: 19px;
    margin-right: 9px;
    border-bottom: 1px solid #484848;
}

.layer.current {
    height: 21px;
}

.eye {
    width: 8px;
    height: 6px;
    margin: 0 10px 0 4px;
}

.thumb-t {
    width: 10px;
    height: 10px;
    margin: 0 8px 0 0;
}

.thumb {
    width: 16px;
    height: 12px;
    margin: 0 5px 0 -3px;
    background-color: #fff;
}

.padlock {
    width: 6px;
    height: 6px;
    margin: 0 8px 0 auto;
}

.layer-space {
    flex: 1;
    background-color: #4d4d4d;
}

.layer-actions {
    display: flex;
    justify-content: flex-end;
    gap: 7px;
    height: 16px;
    padding-right: 14px;
}

.layer-actions svg {
    width: 7px;
    height: 7px;
}

/* taskbar */
.taskbar {
    display: flex;
    flex: none;
    height: 20px;
    border-top: 1px solid #a09079;
    background: linear-gradient(to right, #7d6750, #8b7356 30%, #6f5a46 60%, #90765a 80%, #4d4037 90%, #59483c);
}

.app {
    width: 30px;
    margin-right: 2px;
}

.app:first-child {
    width: 29px;
}

.app svg {
    width: 19px;
    height: 19px;
}

.open {
    border: 1px solid #ada18f;
    border-radius: 2px;
    background: linear-gradient(#b0a28f, #8f7c65);
}

.bright {
    background: linear-gradient(#dcd7cf, #b9b1a5);
}

.adobe {
    width: 14px;
    height: 14px;
    border: 1px solid #f27e0b;
    background-color: #291300;
    color: #f28a12;
    font-size: 9px;
    font-weight: bold;
    line-height: 12px;
}

.adobe.ps {
    width: 16px;
    height: 15px;
    border-color: #1ca5cc;
    background-color: #02202c;
    color: #29c5f6;
}

.tray {
    display: flex;
    align-items: center;
    gap: 4px;
    margin-left: auto;
}

.tray svg {
    width: 8px;
    height: 8px;
}

.clock {
    width: 42px;
    color: #fff;
    line-height: 9px;
    text-align: center;
}

.desktop {
    width: 7px;
    border-left: 1px solid #8d7d6c;
    background-color: #3c332d;
}

.ime {
    position: absolute;
    bottom: 20px;
    left: 0;
    display: flex;
    align-items: center;
    gap: 3px;
    width: 96px;
    height: 12px;
    background-color: #fff;
    color: #2272c3;
}

.ime svg {
    width: 8px;
    height: 8px;
}

.ime .sogou {
    width: 14px;
    height: 14px;
}

.meter {
    position: absolute;
    right: 0;
    bottom: 44px;
    width: 5px;
    height: 30px;
    border: 1px solid #23263c;
    background: linear-gradient(#303754 65%, #4fae8b 65%);
}

.watermark {
    position: absolute;
    right: 49px;
    bottom: 16px;
    overflow: visible;
}

.mark {
    fill: #fff;
    stroke: #ccc;
    stroke-width: 1px;
    paint-order: stroke;
    opacity: 0.75;
}

.bai {
    font-family: "Liberation Sans", sans-serif;
    font-size: 41px;
    font-weight: bold;
}

.jing {
    font-family: "Noto Sans CJK SC", sans-serif;
    font-size: 30px;
    font-weight: bold;
}

.url {
    font-family: "Noto Sans", sans-serif;
    font-size: 21px;
}

.du {
    fill: #555;
    font-family: "Liberation Sans", sans-serif;
    font-size: 24px;
    font-weight: bold;
}
```
